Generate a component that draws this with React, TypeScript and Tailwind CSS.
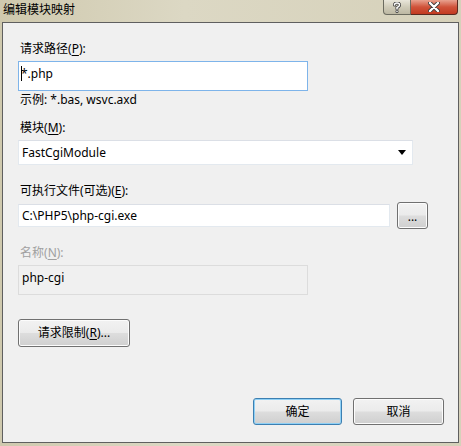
import { ReactNode } from 'react';

const font = "font-['Noto_Sans','Noto_Sans_CJK_SC',sans-serif]";

function Label({ children, disabled }: { children: ReactNode; disabled?: boolean }) {
  return (
    <div className={`pl-[2px] text-[12px] leading-[16px] ${disabled ? 'text-[#a0a0a0]' : 'text-black'}`}>
      {children}
    </div>
  );
}

function Key({ k }: { k: string }) {
  return (
    <>
      (<span className="underline underline-offset-2">{k}</span>)
    </>
  );
}

function Button({ children, primary, className = '' }: { children: ReactNode; primary?: boolean; className?: string }) {
  return (
    <div
      className={`flex items-center justify-center rounded-[3px] border text-[12px] text-black ${
        primary ? 'border-[#3c7fb1] shadow-[inset_0_0_0_1px_#8fd0f5]' : 'border-[#707070] shadow-[inset_0_0_0_1px_#fcfcfc]'
      } bg-[linear-gradient(#f2f2f2_0%,#ebebeb_48%,#dddddd_52%,#cfcfcf_100%)] ${className}`}
    >
      {children}
    </div>
  );
}

export default function App() {
  return (
    <div className={`w-[461px] h-[446px] bg-[linear-gradient(90deg,#cfc9ae,#dcd8c4_40%,#d6d1ba)] flex flex-col ${font}`}>
      {/* title bar */}
      <div className="h-[22px] flex items-start justify-between shrink-0">
        <div className="pl-[3px] pt-[2px] text-[12px] leading-[16px] text-black">编辑模块映射</div>
        <div className="flex mr-[3px]">
          <div className="w-[28px] h-[15px] rounded-bl-[4px] border border-t-0 border-[#6b6b5f] bg-[linear-gradient(#e9e6da,#cfcbb8_50%,#bdb8a3)] flex items-center justify-center">
            <svg width="8" height="11" viewBox="0 0 8 11">
              <path d="M1.5 3 Q1.5 1 4 1 Q6.5 1 6.5 3 Q6.5 4.5 4 5.5 V7 M4 9.2 V9.4" fill="none" stroke="#3a3a3a" strokeWidth="3" strokeLinecap="round" />
              <path d="M1.5 3 Q1.5 1 4 1 Q6.5 1 6.5 3 Q6.5 4.5 4 5.5 V7 M4 9.2 V9.4" fill="none" stroke="#ffffff" strokeWidth="1.5" strokeLinecap="round" />
            </svg>
          </div>
          <div className="w-[47px] h-[15px] rounded-br-[4px] border border-t-0 border-l-0 border-[#5a2a20] bg-[linear-gradient(#e8a28f,#d0533a_50%,#c23a20)] flex items-center justify-center">
            <svg width="12" height="10" viewBox="0 0 12 10">
              <path d="M2 1 L10 9 M10 1 L2 9" stroke="#3a3a3a" strokeWidth="4" strokeLinecap="round" />
              <path d="M2 1 L10 9 M10 1 L2 9" stroke="#ffffff" strokeWidth="2.4" strokeLinecap="round" />
            </svg>
          </div>
        </div>
      </div>

      {/* client area */}
      <div className="mx-[2px] mb-[3px] flex-1 border border-[#5f5f5f] bg-[#f0f0f0] pl-[15px] flex flex-col">
        <div className="mt-[18px]">
          <Label>
            请求路径<Key k="P" />:
          </Label>
        </div>
        <div className="mt-[4px] w-[290px] h-[30px] border border-[#7eb4ea] bg-white px-[2px] pt-[4px] text-[12px] leading-[16px] text-black flex items-start">
          <span className="w-px h-[15px] bg-black mr-[-1px]" />
          *.php
        </div>
        <div className="mt-[1px]">
          <Label>示例: *.bas, wsvc.axd</Label>
        </div>

        <div className="mt-[12px]">
          <Label>
            模块<Key k="M" />:
          </Label>
        </div>
        <div className="mt-[4px] w-[395px] h-[25px] border border-[#e3e9ef] border-t-[#dbdfe6] bg-white pl-[3px] pr-[6px] flex items-center justify-between text-[12px] text-black">
          <span>FastCgiModule</span>
          <svg width="8" height="5" viewBox="0 0 8 5">
            <path d="M0 0 H8 L4 5 Z" fill="#000" />
          </svg>
        </div>

        <div className="mt-[18px]">
          <Label>
            可执行文件(可选)<Key k="E" />:
          </Label>
        </div>
        <div className="mt-[3px] flex items-center">
          <div className="w-[372px] h-[23px] border border-[#e3e9ef] border-t-[#dbdfe6] bg-white pl-[3px] flex items-center text-[12px] text-black">
            C:\PHP5\php-cgi.exe
          </div>
          <Button className="ml-[7px] w-[31px] h-[27px] leading-none pt-[3px]">...</Button>
        </div>

        <div className="mt-[16px]">
          <Label disabled>
            名称<Key k="N" />:
          </Label>
        </div>
        <div className="mt-[4px] w-[290px] h-[30px] border border-[#dcdcdc] bg-[#f0f0f0] pl-[3px] pt-[4px] text-[12px] leading-[16px] text-black">
          php-cgi
        </div>

        <Button className="mt-[24px] w-[112px] h-[28px]">
          请求限制<Key k="R" />...
        </Button>

        <div className="mt-auto mb-[17px] flex justify-end pr-[14px] gap-[11px]">
          <Button primary className="w-[89px] h-[27px]">确定</Button>
          <Button className="w-[91px] h-[27px]">取消</Button>
        </div>
      </div>
    </div>
  );
}
